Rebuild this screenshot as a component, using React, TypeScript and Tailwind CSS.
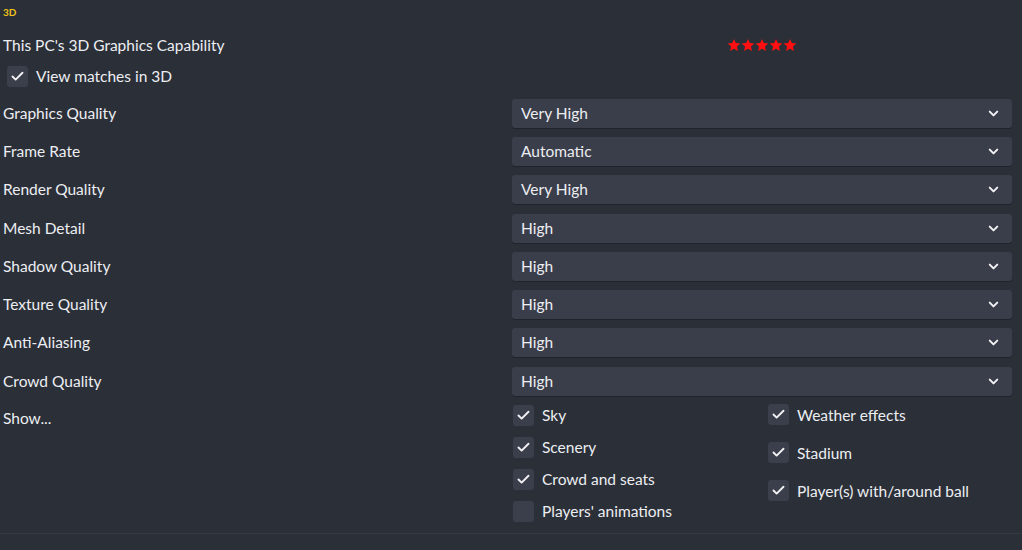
import { ChevronDown, Check } from "lucide-react";

const dropdowns: [string, string][] = [
  ["Graphics Quality", "Very High"],
  ["Frame Rate", "Automatic"],
  ["Render Quality", "Very High"],
  ["Mesh Detail", "High"],
  ["Shadow Quality", "High"],
  ["Texture Quality", "High"],
  ["Anti-Aliasing", "High"],
  ["Crowd Quality", "High"],
];

const showLeft: [string, boolean][] = [
  ["Sky", true],
  ["Scenery", true],
  ["Crowd and seats", true],
  ["Players' animations", false],
];

const showRight: [string, boolean][] = [
  ["Weather effects", true],
  ["Stadium", true],
  ["Player(s) with/around ball", true],
];

function Box({ checked }: { checked: boolean }) {
  return (
    <span className="flex size-[21px] shrink-0 items-center justify-center rounded-[3px] bg-[#3b3e4b]">
      {checked && <Check className="size-[15px] text-[#f2f2f4]" strokeWidth={3} />}
    </span>
  );
}

function CheckRow({ label, checked, className }: { label: string; checked: boolean; className?: string }) {
  return (
    <div className={"flex items-center gap-2 " + (className ?? "")}>
      <Box checked={checked} />
      <span>{label}</span>
    </div>
  );
}

function Star() {
  return (
    <svg viewBox="0 0 24 24" className="size-[14px]" fill="#ff1010">
      <path d="M12 1.5l3.1 7.2 7.8.7-5.9 5.2 1.8 7.7L12 18.3l-6.8 4 1.8-7.7-5.9-5.2 7.8-.7z" />
    </svg>
  );
}

export default function App() {
  return (
    <div className="min-h-screen bg-[#2b2f37] text-[15.5px] leading-[23px] text-[#eceef2] font-['Lato','Open_Sans',sans-serif]">
      <div className="pl-[3px] pr-[10px]">
        <div className="flex h-6 items-center text-[10px] font-bold text-[#f0c419]">3D</div>

        <div className="grid h-[30px] grid-cols-[509px_500px] items-center mt-[6px]">
          <span>This PC's 3D Graphics Capability</span>
          <div className="flex justify-center">
            {[0, 1, 2, 3, 4].map((i) => (
              <Star key={i} />
            ))}
          </div>
        </div>

        <CheckRow label="View matches in 3D" checked className="h-[32px] pl-1 pt-px" />

        <div className="mt-[2px]">
          {dropdowns.map(([label, value]) => (
            <div key={label} className="grid h-[38.3px] grid-cols-[509px_500px] items-center">
              <span>{label}</span>
              <div className="flex h-[29px] items-center justify-between rounded-[3px] bg-[#3a3d4a] pl-[9px] pr-[11px] shadow-[0_1px_0_rgba(0,0,0,0.25)]">
                <span>{value}</span>
                <ChevronDown className="size-[15px] text-[#f2f2f4]" strokeWidth={3.2} />
              </div>
            </div>
          ))}
        </div>

        <div className="grid grid-cols-[509px_500px] -mt-px pb-[6px]">
          <div className="pt-[8px]">Show...</div>
          <div className="grid grid-cols-[255px_245px] pl-px">
            <div className="flex flex-col">
              {showLeft.map(([l, c]) => (
                <CheckRow key={l} label={l} checked={c} className="h-[32px]" />
              ))}
            </div>
            <div className="flex flex-col">
              {showRight.map(([l, c]) => (
                <CheckRow key={l} label={l} checked={c} className="h-[38px] items-start pt-[5px]" />
              ))}
            </div>
          </div>
        </div>
      </div>
      <div className="border-t border-[#363a44] pl-[3px] pt-[9px] text-[10px] font-bold text-[#f0c419]">IN MATCH</div>
    </div>
  );
}
